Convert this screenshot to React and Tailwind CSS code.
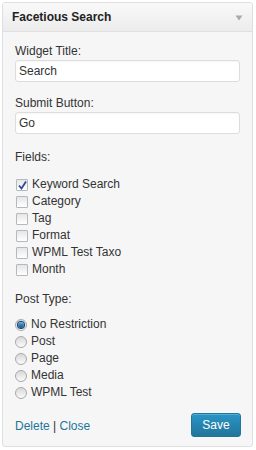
import React from "react";

const F = { fontFamily: '"Liberation Sans", Arial, sans-serif' };

function Checkbox({ checked }) {
  return (
    <span className="relative mr-[4px] inline-block h-[12px] w-[12px] shrink-0 rounded-[1px] border border-[#b4b9be] bg-gradient-to-b from-[#e6e6e6] to-[#ffffff]">
      {checked && (
        <svg className="absolute left-[0px] top-[0px]" width="11" height="11" viewBox="0 0 11 11">
          <path d="M2 5.5 L4.5 8.5 L9 1.5" fill="none" stroke="#2b4a9c" strokeWidth="1.8" />
        </svg>
      )}
    </span>
  );
}

function Radio({ checked }) {
  return (
    <span className="relative mr-[4px] inline-flex h-[12px] w-[12px] shrink-0 items-center justify-center rounded-full border border-[#a8a8a8] bg-gradient-to-b from-[#d8d8d8] to-[#fbfbfb]">
      {checked && (
        <span className="h-[6px] w-[6px] rounded-full bg-gradient-to-b from-[#5ab3e6] to-[#0e4f86] ring-1 ring-[#1c3f66]" />
      )}
    </span>
  );
}

export default function App() {
  const fields = ["Keyword Search", "Category", "Tag", "Format", "WPML Test Taxo", "Month"];
  const types = ["No Restriction", "Post", "Page", "Media", "WPML Test"];
  return (
    <div className="h-[450px] w-[256px] bg-white pl-[2px] pt-[2px]" style={F}>
      <div className="w-[251px] overflow-hidden rounded-[3px] border border-[#dfdfdf] bg-[#f6f6f6]">
        <div className="flex h-[29px] items-center justify-between border-b border-[#dfdfdf] bg-gradient-to-b from-[#f9f9f9] to-[#ececec] pl-[9px] pr-[9px]">
          <span className="text-[12px] font-bold leading-[18px] text-[#222]">Facetious Search</span>
          <svg width="8" height="6" viewBox="0 0 8 6" className="mt-[1px]">
            <path d="M0.5 0.5 H7.5 L4 5.5 Z" fill="#aaaaaa" />
          </svg>
        </div>
        <div className="px-[12px] pb-[9px] text-[12px] text-[#333]">
          <div className="mt-[10px] leading-[18px]">Widget Title:</div>
          <div className="flex h-[22px] w-[225px] items-center rounded-[3px] border border-[#dddddd] bg-white px-[3px] text-[12px] text-[#333] shadow-[inset_0_1px_2px_rgba(0,0,0,0.04)]">
            Search
          </div>
          <div className="mt-[12px] leading-[18px]">Submit Button:</div>
          <div className="flex h-[22px] w-[225px] items-center rounded-[3px] border border-[#dddddd] bg-white px-[3px] text-[12px] text-[#333] shadow-[inset_0_1px_2px_rgba(0,0,0,0.04)]">
            Go
          </div>
          <div className="mt-[14px] leading-[18px]">Fields:</div>
          <div className="mt-[10px] flex flex-col">
            {fields.map((f, i) => (
              <div key={f} className="flex h-[17px] items-center pl-[1px] leading-[17px]">
                <Checkbox checked={i === 0} />
                <span>{f}</span>
              </div>
            ))}
          </div>
          <div className="mt-[12px] leading-[18px]">Post Type:</div>
          <div className="mt-[8px] flex flex-col">
            {types.map((t, i) => (
              <div key={t} className="flex h-[17px] items-center leading-[17px]">
                <Radio checked={i === 0} />
                <span>{t}</span>
              </div>
            ))}
          </div>
          <div className="mt-[12px] flex items-center justify-between">
            <div className="mt-[1px] leading-[18px]">
              <a className="text-[#21759b]">Delete</a>
              <span className="text-[#333]"> | </span>
              <a className="text-[#21759b]">Close</a>
            </div>
            <button className="mr-[-1px] h-[24px] w-[50px] rounded-[3px] border border-[#21759b] bg-gradient-to-b from-[#2a95c5] to-[#21759b] text-[12px] leading-[22px] text-white shadow-[inset_0_1px_0_rgba(120,200,230,0.5)]">
              Save
            </button>
          </div>
        </div>
      </div>
    </div>
  );
}
